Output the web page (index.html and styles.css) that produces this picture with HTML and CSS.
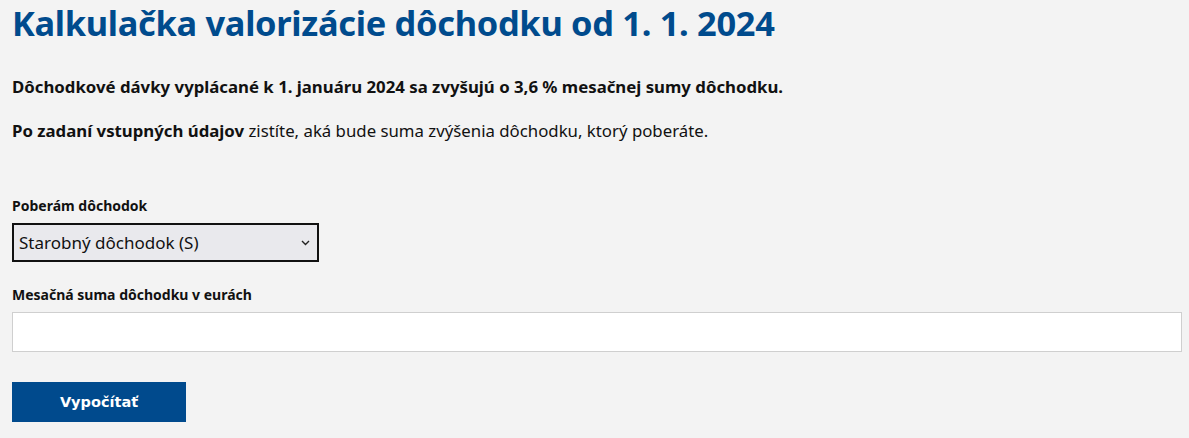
FILE: index.html
```html
<!DOCTYPE html>
<html lang="sk">
<head>
<meta charset="utf-8">
<title>Kalkulačka valorizácie dôchodku</title>
<link rel="stylesheet" href="styles.css">
</head>
<body>
<main class="page">
  <h1 class="title">Kalkulačka valorizácie dôchodku od 1. 1. 2024</h1>
  <p class="lead"><strong>Dôchodkové dávky vyplácané k 1. januáru 2024 sa zvyšujú o 3,6 % mesačnej sumy dôchodku.</strong></p>
  <p class="intro"><strong>Po zadaní vstupných údajov</strong> zistíte, aká bude suma zvýšenia dôchodku, ktorý poberáte.</p>
  <form class="calc">
    <div class="field">
      <label class="label" for="typ">Poberám dôchodok</label>
      <div class="select-wrap">
        <select id="typ" class="select">
          <option>Starobný dôchodok (S)</option>
        </select>
        <svg class="chev" width="9" height="6" viewBox="0 0 9 6"><path d="M1 1 L4.5 4.5 L8 1" fill="none" stroke="#222" stroke-width="1.4"/></svg>
      </div>
    </div>
    <div class="field">
      <label class="label" for="suma">Mesačná suma dôchodku v eurách</label>
      <input id="suma" class="input" type="text">
    </div>
    <button type="button" class="btn">Vypočítať</button>
  </form>
</main>
</body>
</html>
```
FILE: styles.css
```css
html, body {
  margin: 0;
  padding: 0;
  background: #f3f3f3;
}
body {
  font-family: "Noto Sans", "Open Sans", sans-serif;
  color: #111;
}
.page {
  width: 1170px;
  padding: 0 0 0 12px;
}
.title {
  margin: 0;
  padding-top: 1px;
  font-size: 34.4px;
  line-height: 44px;
  font-weight: 700;
  color: #004b8d;
  letter-spacing: -0.3px;
}
.lead {
  margin: 30px 0 0;
  font-size: 16.8px;
  line-height: 24px;
}
.intro {
  margin: 20px 0 0;
  font-size: 16.8px;
  line-height: 24px;
}
.calc {
  margin-top: 54px;
  display: flex;
  flex-direction: column;
  align-items: flex-start;
}
.field {
  display: flex;
  flex-direction: column;
  width: 100%;
  margin-bottom: 24px;
}
.label {
  font-size: 14px;
  font-weight: 700;
  line-height: 18px;
  margin-bottom: 8px;
}
.select-wrap {
  position: relative;
  width: 307px;
}
.select {
  appearance: none;
  width: 307px;
  height: 39px;
  border: 2px solid #111;
  border-radius: 0;
  background: #e9e9ed;
  font-family: "Noto Sans", sans-serif;
  font-size: 17px;
  padding: 0 0 0 5px;
  color: #111;
  margin: 0;
}
.chev {
  position: absolute;
  right: 9px;
  top: 17px;
  pointer-events: none;
}
.input {
  box-sizing: border-box;
  width: 1170px;
  height: 40px;
  border: 1px solid #cfcfcf;
  background: #fff;
  margin: 0;
}
.btn {
  margin-top: 6px;
  width: 174px;
  height: 40px;
  border: 0;
  border-radius: 0;
  background: #004a8d;
  color: #fff;
  font-family: "DejaVu Sans", Verdana, sans-serif;
  font-weight: 700;
  font-size: 14.5px;
}
```
